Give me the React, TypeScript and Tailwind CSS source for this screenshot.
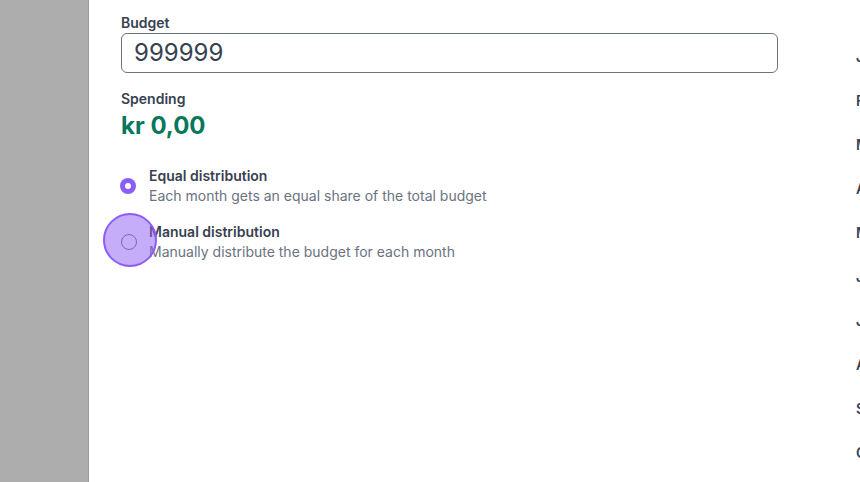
import React from 'react'

const months = ['January', 'February', 'March', 'April', 'May', 'June', 'July', 'August', 'September', 'October']

function RadioOption({ title, description, checked }: { title: string; description: string; checked?: boolean }) {
  return (
    <div className="flex items-center">
      {checked ? (
        <span className="-ml-px flex h-4 w-4 items-center justify-center rounded-full bg-[#8b5cf6]">
          <span className="h-1.5 w-1.5 rounded-full bg-white" />
        </span>
      ) : (
        <span className="h-4 w-4 rounded-full border border-[#6b7280] bg-white" />
      )}
      <div className={checked ? 'ml-[13px]' : 'ml-3'}>
        <div className="text-sm font-semibold leading-5 text-[#374151]">{title}</div>
        <div className="text-sm leading-5 text-[#6b7280]">{description}</div>
      </div>
    </div>
  )
}

export default function App() {
  return (
    <div className="relative flex h-[482px] w-[860px] overflow-hidden bg-white font-['Inter',sans-serif]">
      <aside className="h-full w-[89px] shrink-0 border-r border-[#9a9a9a] bg-[#adadad]" />

      <main className="ml-[32px] w-[657px] shrink-0 pt-[13px]">
        <label className="block text-sm font-semibold leading-5 text-[#374151]">Budget</label>
        <div className="flex h-10 items-center rounded-md border border-[#6b7280] px-3">
          <span className="text-2xl text-[#374151]">999999</span>
        </div>

        <div className="mt-4 text-sm font-semibold leading-5 text-[#374151]">Spending</div>
        <div className="mt-px text-2xl font-bold leading-8 text-[#08785a]">kr 0,00</div>

        <div className="mt-6 flex flex-col gap-4">
          <RadioOption checked title="Equal distribution" description="Each month gets an equal share of the total budget" />
          <RadioOption title="Manual distribution" description="Manually distribute the budget for each month" />
        </div>
      </main>

      <div className="ml-[78px] flex shrink-0 flex-col gap-6 pt-[47px]">
        {months.map((m) => (
          <div key={m} className="text-sm font-semibold leading-5 text-[#374151]">
            {m}
          </div>
        ))}
      </div>

      <div className="absolute left-[103px] top-[213px] h-[54px] w-[54px] rounded-full border-2 border-[#8b5cf6] bg-[rgba(139,92,246,0.5)]" />
    </div>
  )
}
